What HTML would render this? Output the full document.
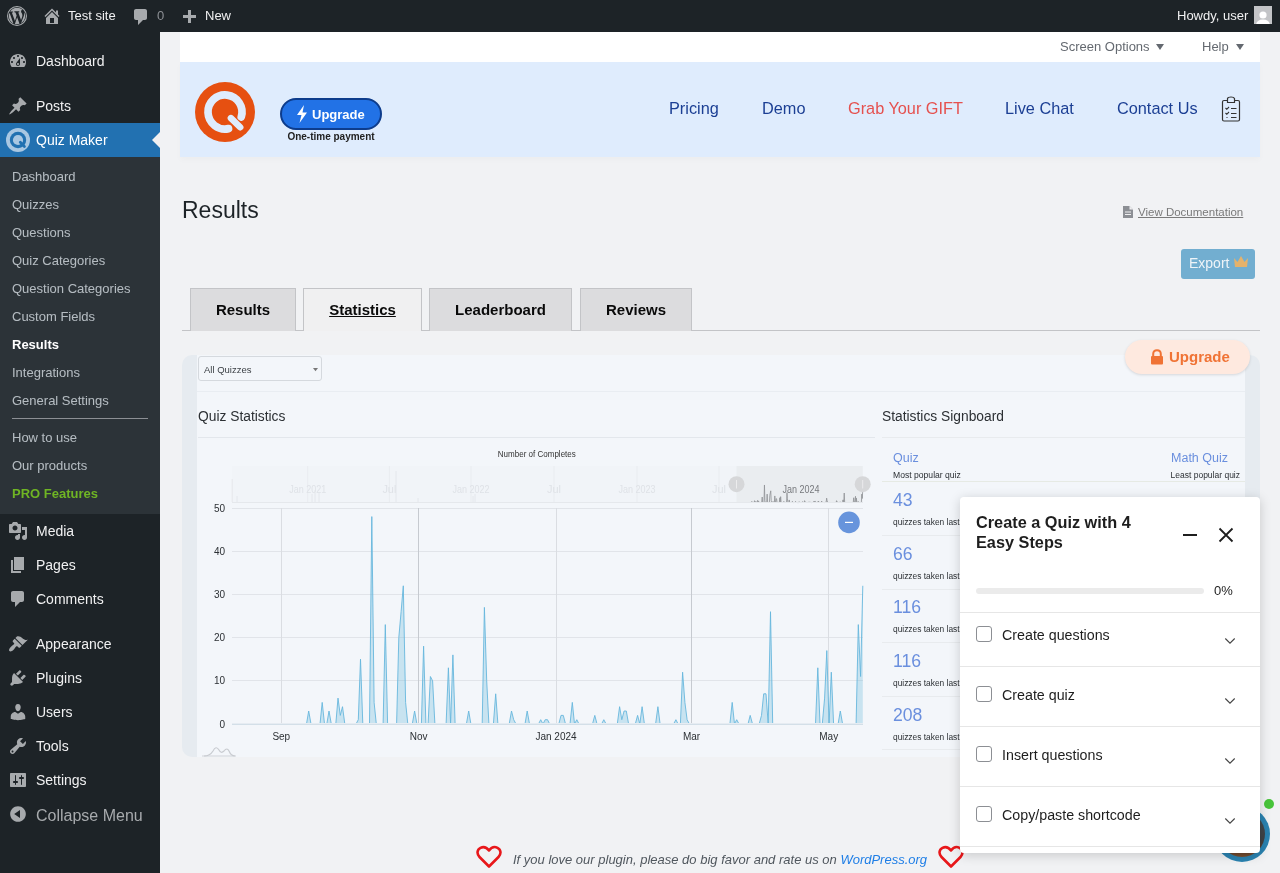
<!DOCTYPE html>
<html><head><meta charset="utf-8">
<style>
*{box-sizing:border-box;margin:0;padding:0}
html,body{width:1280px;height:873px;overflow:hidden;background:#f1f2f4;font-family:"Liberation Sans",sans-serif;font-size:13px;color:#3c434a}
.abs{position:absolute}
#root{position:absolute;left:0;top:0;width:1280px;height:873px;will-change:transform}
#ab{position:absolute;left:0;top:0;width:1280px;height:32px;background:#1d2327;color:#f0f0f1;font-size:13px;line-height:32px}
#side{position:absolute;left:0;top:32px;width:160px;height:841px;background:#1d2327}
.mi{position:absolute;left:0;width:160px;height:34px;line-height:34px;font-size:14px;color:#f0f0f1;padding-left:36px}
.mi svg{position:absolute;left:8px;top:7px;width:20px;height:20px}
.sm{position:absolute;left:12px;font-size:13px;color:rgba(240,246,252,.7);line-height:28px;height:28px}
.tab{position:absolute;top:288px;height:43px;border:1px solid #c3c4c7;border-bottom:none;background:#dcdcde;font-size:15px;font-weight:bold;color:#0a0a0a;text-align:center;line-height:42px}
.tab.act{background:#f0f0f1;height:43px}
</style></head><body><div id="root">
<!-- admin bar -->
<div id="ab">
  <svg class="abs" style="left:7px;top:6px" width="20" height="20" viewBox="0 0 20 20"><circle cx="10" cy="10" r="9.45" fill="none" stroke="#a7aaad" stroke-width="1.1"/><path transform="translate(10 10) scale(.92) translate(-10 -10)" d="M7.78 15.37L4.37 6.220c.55-.02 1.17-.08 1.17-.08.5-.06.44-1.13-.06-1.11 0 0-1.45.11-2.37.11-.18 0-.37 0-.58-.01C4.12 2.69 6.87 1.11 10 1.11c2.330 0 4.45.87 6.05 2.34-.68-.11-1.65.39-1.65 1.58 0 .74.45 1.36.9 2.1.35.61.55 1.36.55 2.46 0 1.49-1.4 5-1.4 5l-3.03-8.37c.54-.02.82-.17.82-.17.5-.05.44-1.25-.06-1.22 0 0-1.44.12-2.38.12-.87 0-2.33-.12-2.33-.12-.5-.03-.56 1.2-.06 1.22l.92.08 1.26 3.41zM17.41 10c.24-.64.74-1.87.43-4.25.7 1.29 1.05 2.71 1.05 4.25 0 3.29-1.73 6.24-4.4 7.78.97-2.59 1.94-5.2 2.92-7.78zM6.1 18.09C3.12 16.65 1.11 13.53 1.11 10c0-1.3.23-2.48.72-3.59C3.25 10.3 4.67 14.2 6.1 18.09zm4.03-6.63l2.58 6.98c-.86.29-1.76.45-2.71.45-.79 0-1.57-.11-2.29-.33.81-2.38 1.62-4.74 2.42-7.1z" fill="#a7aaad"/></svg>
  <svg class="abs" style="left:42px;top:6px" width="20" height="20" viewBox="0 0 20 20"><path d="M16 8.5l1.53 1.53-1.06 1.06L10 4.62l-6.47 6.47-1.06-1.06L10 2.5l4 4v-2h2v4zm-6-2.46l6 5.99V18H4v-5.97zM12 17v-5H8v5h4z" fill="#a7aaad"/></svg>
  <div class="abs" style="left:68px;top:0">Test site</div>
  <svg class="abs" style="left:131px;top:7px" width="20" height="20" viewBox="0 0 20 20"><path d="M5 2h9c1.1 0 2 .9 2 2v7c0 1.1-.9 2-2 2h-2l-5 5v-5H5c-1.1 0-2-.9-2-2V4c0-1.1.9-2 2-2z" fill="#a7aaad"/></svg>
  <div class="abs" style="left:157px;top:0;color:#8c8f94">0</div>
  <svg class="abs" style="left:179px;top:8px" width="20" height="20" viewBox="0 0 20 20"><path d="M17 7v3h-5v5H9v-5H4V7h5V2h3v5h5z" fill="#a7aaad"/></svg>
  <div class="abs" style="left:205px;top:0">New</div>
  <div class="abs" style="left:1177px;top:0">Howdy, user</div>
  <div class="abs" style="left:1254px;top:6px;width:18px;height:18px;background:#c3c4c7;overflow:hidden">
    <svg width="18" height="18" viewBox="0 0 18 18"><circle cx="9" cy="7" r="3.6" fill="#fff"/><path d="M2 18 Q2 11.5 9 11.5 Q16 11.5 16 18 Z" fill="#fff"/></svg>
  </div>
</div>

<!-- sidebar -->
<div id="side"></div>
<div id="menu">
  <div class="mi" style="top:44px">Dashboard
    <svg viewBox="0 0 20 20"><path d="M3.76 16h12.48c1.1-1.37 1.76-3.11 1.76-5 0-4.42-3.58-8-8-8s-8 3.58-8 8c0 1.89.66 3.63 1.76 5zM10 4c.55 0 1 .45 1 1s-.45 1-1 1-1-.45-1-1 .45-1 1-1zM6 6c.55 0 1 .45 1 1s-.45 1-1 1-1-.45-1-1 .45-1 1-1zm8 0c.55 0 1 .45 1 1s-.45 1-1 1-1-.45-1-1 .45-1 1-1zm-5.37 5.55L12 7v6c0 1.1-.9 2-2 2s-2-.9-2-2c0-.57.24-1.08.63-1.45zM4 10c.55 0 1 .45 1 1s-.45 1-1 1-1-.45-1-1 .45-1 1-1zm12 0c.55 0 1 .45 1 1s-.45 1-1 1-1-.45-1-1 .45-1 1-1zm-5 3c0-.55-.45-1-1-1s-1 .45-1 1 .45 1 1 1 1-.45 1-1z" fill="#a7aaad"/></svg></div>
  <div class="mi" style="top:89px">Posts
    <svg viewBox="0 0 20 20"><path d="M10.44 3.02l1.82-1.82 6.36 6.35-1.83 1.82c-1.05-.68-2.48-.57-3.41.36l-.75.75c-.92.93-1.04 2.35-.35 3.41l-1.83 1.82-2.41-2.41-2.8 2.79c-.42.42-3.38 2.71-3.8 2.29s1.86-3.39 2.28-3.81l2.79-2.79L4.1 9.36l1.83-1.82c1.05.69 2.48.57 3.4-.36l.75-.75c.93-.92 1.05-2.35.36-3.41z" fill="#a7aaad"/></svg></div>
  <div class="abs" style="left:0;top:123px;width:160px;height:34px;background:#2271b1"></div>
  <div class="mi" style="top:123px;color:#fff">Quiz Maker
    <svg viewBox="0 0 24 24" style="left:6px;top:5px;width:24px;height:24px"><circle cx="12" cy="12" r="12" fill="#a9c7e2"/><circle cx="12" cy="12" r="8.2" fill="#2271b1"/><circle cx="12" cy="12" r="5.1" fill="#a9c7e2"/><path d="M14.3 14.3 L18.4 18.4" stroke="#2271b1" stroke-width="2.8" stroke-linecap="round"/></svg></div>
  <svg class="abs" style="left:152px;top:132px" width="8" height="16" viewBox="0 0 8 16"><path d="M8 0 L0 8 L8 16 Z" fill="#f0f0f1"/></svg>
  <div class="abs" style="left:0;top:157px;width:160px;height:357px;background:#2c3338"></div>
  <div class="sm" style="top:163px">Dashboard</div>
  <div class="sm" style="top:191px">Quizzes</div>
  <div class="sm" style="top:219px">Questions</div>
  <div class="sm" style="top:247px">Quiz Categories</div>
  <div class="sm" style="top:275px">Question Categories</div>
  <div class="sm" style="top:303px">Custom Fields</div>
  <div class="sm" style="top:331px;color:#fff;font-weight:bold">Results</div>
  <div class="sm" style="top:359px">Integrations</div>
  <div class="sm" style="top:387px">General Settings</div>
  <div class="abs" style="left:12px;top:418px;width:136px;height:1px;background:#8c8f94"></div>
  <div class="sm" style="top:424px">How to use</div>
  <div class="sm" style="top:452px">Our products</div>
  <div class="sm" style="top:480px;color:#6fb524;font-weight:bold">PRO Features</div>

  <div class="mi" style="top:514px">Media
    <svg viewBox="0 0 20 20"><path d="M13 11V4c0-.55-.45-1-1-1h-1.67L9 1H5L3.67 3H2c-.55 0-1 .45-1 1v7c0 .55.45 1 1 1h10c.55 0 1-.45 1-1zM7 4.5c1.38 0 2.5 1.12 2.5 2.5S8.38 9.5 7 9.5 4.5 8.38 4.5 7 5.62 4.5 7 4.5zM14 6h5v10.5c0 1.38-1.12 2.5-2.5 2.5S14 17.88 14 16.5s1.12-2.5 2.5-2.5c.17 0 .34.02.5.05V9h-3V6zm-4 8.05V13h2v3.5c0 1.38-1.12 2.5-2.5 2.5S7 17.88 7 16.5 8.12 14 9.5 14c.17 0 .34.02.5.05z" fill="#a7aaad"/></svg></div>
  <div class="mi" style="top:548px">Pages
    <svg viewBox="0 0 20 20"><path d="M6 15V2h10v13H6zm-1 1h8v2H3V5h2v11z" fill="#a7aaad"/></svg></div>
  <div class="mi" style="top:582px">Comments
    <svg viewBox="0 0 20 20"><path d="M5 2h9c1.1 0 2 .9 2 2v7c0 1.1-.9 2-2 2h-2l-5 5v-5H5c-1.1 0-2-.9-2-2V4c0-1.1.9-2 2-2z" fill="#a7aaad"/></svg></div>
  <div class="mi" style="top:627px">Appearance
    <svg viewBox="0 0 20 20"><path d="M14.48 11.06L7.41 3.99l1.5-1.5c.5-.56 2.3-.47 3.51.32 1.21.8 1.43 1.28 2.91 2.1 1.180.64 2.45 1.26 4.45.85zm-.71.71L6.7 4.7 4.930 6.47c-.39.39-.39 1.02 0 1.41l1.06 1.06c.39.39.39 1.03 0 1.42-.6.6-1.43 1.11-2.21 1.69-.35.26-.7.53-1.01.84C1.43 14.23.4 16.08 1.4 17.07c.99 1 2.84-.03 4.18-1.36.31-.31.58-.66.85-1.020.57-.78 1.08-1.61 1.69-2.21.39-.39 1.02-.39 1.41 0l1.06 1.06c.39.39 1.02.39 1.41 0z" fill="#a7aaad"/></svg></div>
  <div class="mi" style="top:661px">Plugins
    <svg viewBox="0 0 20 20"><path d="M13.11 4.36L9.87 7.6 8 5.73l3.24-3.24c.35-.34 1.05-.2 1.56.32.52.51.66 1.21.31 1.55zm-8 1.77l.91-1.12 9.01 9.01-1.19.84c-.71.71-2.63 1.16-3.820 1.16H6.14L4.9 17.26c-.59.59-1.54.59-2.12 0-.59-.58-.59-1.53 0-2.12l1.24-1.24v-3.88c0-1.13.4-3.19 1.09-3.89zm7.26 3.97l3.24-3.24c.34-.35 1.04-.21 1.55.31.52.51.66 1.21.31 1.55l-3.24 3.25z" fill="#a7aaad"/></svg></div>
  <div class="mi" style="top:695px">Users
    <svg viewBox="0 0 20 20"><path d="M10 9.25c-2.27 0-2.73-3.44-2.73-3.44C7 4.02 7.82 2 9.97 2c2.16 0 2.98 2.02 2.71 3.81 0 0-.41 3.44-2.68 3.44zm0 2.57L12.72 10c2.39 0 4.52 2.33 4.52 4.53v2.49s-3.65 1.13-7.24 1.13c-3.65 0-7.24-1.13-7.24-1.13v-2.49c0-2.25 1.94-4.48 4.47-4.48z" fill="#a7aaad"/></svg></div>
  <div class="mi" style="top:729px">Tools
    <svg viewBox="0 0 20 20"><path d="M16.68 9.77c-1.34 1.34-3.3 1.67-4.95.99l-5.41 6.52c-.99.99-2.59.99-3.58 0s-.99-2.59 0-3.57l6.52-5.42c-.68-1.65-.35-3.61.99-4.95 1.28-1.28 3.12-1.62 4.72-1.06l-2.89 2.89 2.82 2.82 2.86-2.87c.53 1.58.18 3.39-1.08 4.65zM3.81 16.21c.4.39 1.04.39 1.43 0 .4-.4.4-1.04 0-1.43-.39-.4-1.03-.4-1.430 0-.39.39-.39 1.03 0 1.43z" fill="#a7aaad"/></svg></div>
  <div class="mi" style="top:763px">Settings
    <svg viewBox="0 0 20 20"><path d="M18 16V4c0-.55-.45-1-1-1H3c-.55 0-1 .45-1 1v12c0 .55.45 1 1 1h14c.55 0 1-.45 1-1zM8 11h1c.55 0 1 .45 1 1s-.45 1-1 1H8v1.5c0 .28-.22.5-.5.5s-.5-.22-.5-.5V13H6c-.55 0-1-.45-1-1s.45-1 1-1h1V5.5c0-.28.22-.5.5-.5s.5.22.5.5V11zm5-2h-1c-.55 0-1-.45-1-1s.45-1 1-1h1V5.5c0-.28.22-.5.5-.5s.5.22.5.5V7h1c.55 0 1 .45 1 1s-.45 1-1 1h-1v5.5c0 .28-.22.5-.5.5s-.5-.22-.5-.5V9z" fill="#a7aaad"/></svg></div>
  <div class="mi" style="top:799px;color:#a7aaad;font-size:16px">Collapse Menu
    <svg viewBox="0 0 20 20" style="top:5px"><path d="M10 2.16c4.33 0 7.84 3.51 7.84 7.84S14.33 17.84 10 17.84 2.16 14.33 2.160 10 5.71 2.16 10 2.16zm2 11.72V6.12L6.18 9.97z" fill="#a7aaad"/></svg></div>
</div>

<!-- content -->
<div class="abs" style="left:180px;top:32px;width:1080px;height:30px;background:#fff"></div>
<div class="abs" style="left:1060px;top:32px;height:30px;line-height:30px;font-size:13px;color:#646970">Screen Options</div>
<svg class="abs" style="left:1156px;top:44px" width="8" height="6" viewBox="0 0 8 6"><path d="M0 0 H8 L4 6 Z" fill="#646970"/></svg>
<div class="abs" style="left:1202px;top:32px;height:30px;line-height:30px;font-size:13px;color:#646970">Help</div>
<svg class="abs" style="left:1236px;top:44px" width="8" height="6" viewBox="0 0 8 6"><path d="M0 0 H8 L4 6 Z" fill="#646970"/></svg>

<div class="abs" style="left:180px;top:62px;width:1080px;height:95px;background:#dfecfd;box-shadow:0 3px 6px rgba(0,0,0,.025)"></div>
<svg class="abs" style="left:195px;top:82px" width="60" height="60" viewBox="0 0 60 60"><circle cx="30" cy="30" r="30" fill="#e65011"/><path d="M46.26 34.97 A17 17 0 1 0 33.53 46.63" fill="none" stroke="#dfecfd" stroke-width="7.7" stroke-linecap="round"/><path d="M35.9 36.1 L45.2 45.3" stroke="#dfecfd" stroke-width="6.5" stroke-linecap="round"/></svg>
<div class="abs" style="left:280px;top:98px;width:102px;height:32px;border-radius:16px;background:#2272e6;border:2px solid #0d3c8c"></div>
<svg class="abs" style="left:296px;top:105px" width="12" height="18" viewBox="0 0 12 18"><path d="M8 0 L1 10 H5.5 L3.5 18 L11 7.5 H6.5 Z" fill="#fff"/></svg>
<div class="abs" style="left:312px;top:99px;height:32px;line-height:32px;font-size:13px;font-weight:bold;color:#fff">Upgrade</div>
<div class="abs" style="left:280px;top:130px;width:102px;text-align:center;font-size:10px;font-weight:bold;color:#222;line-height:14px">One-time payment</div>

<div class="abs" style="left:669px;top:98px;line-height:20px;font-size:16.3px;color:#1c3f94">Pricing</div>
<div class="abs" style="left:762px;top:98px;line-height:20px;font-size:16.3px;color:#1c3f94">Demo</div>
<div class="abs" style="left:848px;top:98px;line-height:20px;font-size:16.3px;color:#e5514f">Grab Your GIFT</div>
<div class="abs" style="left:1005px;top:98px;line-height:20px;font-size:16.3px;color:#1c3f94">Live Chat</div>
<div class="abs" style="left:1117px;top:98px;line-height:20px;font-size:16.3px;color:#1c3f94">Contact Us</div>
<svg class="abs" style="left:1221px;top:96px" width="20" height="26" viewBox="0 0 20 26"><path d="M3 4.5 H6.5 V2.5 Q7 1 10 1 Q13 1 13.5 2.5 V4.5 H17 Q18.5 4.5 18.5 6 V23.5 Q18.5 25 17 25 H3 Q1.5 25 1.5 23.5 V6 Q1.5 4.5 3 4.5 Z M6.5 4.5 V6.5 H13.5 V4.5" fill="none" stroke="#333" stroke-width="1.2"/><path d="M4.5 12 L5.8 13.3 L8 11 M10 12.5 H15.5 M4.5 17 L5.8 18.3 L8 16 M10 17.5 H15.5 M5.5 21.5 H6.5 M10 21.5 H15.5" fill="none" stroke="#333" stroke-width="1.1"/></svg>

<div class="abs" style="left:182px;top:195px;font-size:23px;line-height:30px;color:#1d2327">Results</div>
<svg class="abs" style="left:1123px;top:206px" width="10" height="12" viewBox="0 0 10 12"><path d="M0 0 H6.5 L10 3.5 V12 H0 Z" fill="#8c8f94"/><path d="M6.5 0 V3.5 H10" fill="#f0f0f1"/><path d="M2 6 H8 M2 8.5 H8" stroke="#f0f0f1" stroke-width="1"/></svg>
<div class="abs" style="left:1138px;top:204px;font-size:11.5px;line-height:16px;color:#7a7a7a;text-decoration:underline">View Documentation</div>

<div class="abs" style="left:1181px;top:249px;width:74px;height:30px;border-radius:3px;background:#72aed0"></div>
<div class="abs" style="left:1189px;top:248px;line-height:30px;font-size:14px;color:#eef4f8">Export</div>
<svg class="abs" style="left:1233px;top:255px" width="16" height="14" viewBox="0 0 16 14"><path d="M1 3 L4.5 7 L8 1 L11.5 7 L15 3 L14 12 H2 Z" fill="#e5b26b"/></svg>

<div class="abs" style="left:182px;top:330px;width:1078px;height:1px;background:#c3c4c7"></div>
<div class="tab" style="left:190px;width:106px">Results</div>
<div class="tab act" style="left:303px;width:119px"><u>Statistics</u></div>
<div class="tab" style="left:429px;width:143px">Leaderboard</div>
<div class="tab" style="left:580px;width:112px">Reviews</div>

<!-- stats panel -->
<div class="abs" style="left:182px;top:355px;width:1078px;height:402px;background:#e6ebf0;border-radius:10px"></div>
<div class="abs" style="left:197px;top:355px;width:1048px;height:402px;background:#f3f6fa"></div>
<div class="abs" style="left:198px;top:356px;width:124px;height:25px;border:1px solid #d5d9de;border-radius:3px;background:#f3f6fa"></div>
<div class="abs" style="left:204px;top:357px;line-height:25px;font-size:9.5px;color:#3a3f44">All Quizzes</div>
<svg class="abs" style="left:313px;top:368px" width="5" height="4" viewBox="0 0 5 4"><path d="M0 0 H5 L2.5 3.2 Z" fill="#777"/></svg>
<div class="abs" style="left:197px;top:391px;width:1048px;height:1px;background:#e9edf2"></div>
<div class="abs" style="left:198px;top:408px;line-height:18px;font-size:13.8px;color:#2c3034">Quiz Statistics</div>
<div class="abs" style="left:198px;top:437px;width:677px;height:1px;background:#e3e7ec"></div>
<div class="abs" style="left:882px;top:408px;line-height:18px;font-size:13.8px;color:#2c3034">Statistics Signboard</div>
<div class="abs" style="left:882px;top:437px;width:363px;height:1px;background:#e8ebee"></div>

<div class="abs" style="left:893px;top:450px;line-height:16px;font-size:12.5px;color:#6a8fde">Quiz</div>
<div class="abs" style="left:893px;top:469px;line-height:12px;font-size:8.6px;color:#2c3034">Most popular quiz</div>
<div class="abs" style="left:1100px;top:450px;width:128px;text-align:right;line-height:16px;font-size:12.5px;color:#6a8fde">Math Quiz</div>
<div class="abs" style="left:1100px;top:469px;width:140px;text-align:right;line-height:12px;font-size:8.5px;color:#2c3034">Least popular quiz</div>
<div class="abs" style="left:882px;top:481px;width:363px;height:1px;background:#e6eae4"></div>
<div class="abs" style="left:893px;top:491px;line-height:18px;font-size:17.6px;color:#6a8fde">43</div>
<div class="abs" style="left:893px;top:516px;line-height:12px;font-size:8.4px;color:#2c3034">quizzes taken last</div>
<div class="abs" style="left:882px;top:535px;width:363px;height:1px;background:#e8ebee"></div>
<div class="abs" style="left:893px;top:545px;line-height:18px;font-size:17.6px;color:#6a8fde">66</div>
<div class="abs" style="left:893px;top:570px;line-height:12px;font-size:8.4px;color:#2c3034">quizzes taken last</div>
<div class="abs" style="left:882px;top:589px;width:363px;height:1px;background:#e8ebee"></div>
<div class="abs" style="left:893px;top:598px;line-height:18px;font-size:17.6px;color:#6a8fde">116</div>
<div class="abs" style="left:893px;top:623px;line-height:12px;font-size:8.4px;color:#2c3034">quizzes taken last</div>
<div class="abs" style="left:882px;top:642px;width:363px;height:1px;background:#e8ebee"></div>
<div class="abs" style="left:893px;top:652px;line-height:18px;font-size:17.6px;color:#6a8fde">116</div>
<div class="abs" style="left:893px;top:677px;line-height:12px;font-size:8.4px;color:#2c3034">quizzes taken last</div>
<div class="abs" style="left:882px;top:696px;width:363px;height:1px;background:#e8ebee"></div>
<div class="abs" style="left:893px;top:706px;line-height:18px;font-size:17.6px;color:#6a8fde">208</div>
<div class="abs" style="left:893px;top:731px;line-height:12px;font-size:8.4px;color:#2c3034">quizzes taken last</div>
<div class="abs" style="left:882px;top:749px;width:363px;height:1px;background:#e8ebee"></div>


<div class="abs" style="left:1125px;top:340px;width:125px;height:34px;border-radius:17px;background:#fee9df;box-shadow:0 1px 3px rgba(0,0,0,.13)"></div>
<svg class="abs" style="left:1150px;top:349px" width="14" height="16" viewBox="0 0 14 16"><path d="M3.2 7 V5 Q3.2 1.2 7 1.2 Q10.8 1.2 10.8 5 V7" fill="none" stroke="#f07335" stroke-width="2"/><rect x="1" y="7" width="12" height="8.5" rx="1" fill="#f07335"/></svg>
<div class="abs" style="left:1169px;top:347px;line-height:20px;font-size:15px;font-weight:bold;color:#f07335">Upgrade</div>
<!--CHART-->
<svg class="abs" style="left:0;top:0" width="1280" height="873" viewBox="0 0 1280 873">
<text x="497.8" y="457" textLength="78" lengthAdjust="spacingAndGlyphs" font-size="9.5" fill="#333" font-family="Liberation Sans">Number of Completes</text>
<rect x="232" y="466" width="631" height="37" fill="#f1f4f8"/>
<line x1="307.7" y1="466" x2="307.7" y2="502" stroke="#e9ecf0" stroke-width="1"/>
<line x1="389.4" y1="466" x2="389.4" y2="502" stroke="#e9ecf0" stroke-width="1"/>
<line x1="471" y1="466" x2="471" y2="502" stroke="#e9ecf0" stroke-width="1"/>
<line x1="554" y1="466" x2="554" y2="502" stroke="#e9ecf0" stroke-width="1"/>
<line x1="637" y1="466" x2="637" y2="502" stroke="#e9ecf0" stroke-width="1"/>
<line x1="719" y1="466" x2="719" y2="502" stroke="#e9ecf0" stroke-width="1"/>
<line x1="801" y1="466" x2="801" y2="502" stroke="#e9ecf0" stroke-width="1"/>
<text x="289.2" y="493" textLength="37" lengthAdjust="spacingAndGlyphs" font-size="10.5" fill="#dfe2e7" font-family="Liberation Sans">Jan 2021</text>
<text x="382.4" y="493" textLength="14" lengthAdjust="spacingAndGlyphs" font-size="10.5" fill="#dfe2e7" font-family="Liberation Sans">Jul</text>
<text x="452.5" y="493" textLength="37" lengthAdjust="spacingAndGlyphs" font-size="10.5" fill="#dfe2e7" font-family="Liberation Sans">Jan 2022</text>
<text x="547.0" y="493" textLength="14" lengthAdjust="spacingAndGlyphs" font-size="10.5" fill="#dfe2e7" font-family="Liberation Sans">Jul</text>
<text x="618.5" y="493" textLength="37" lengthAdjust="spacingAndGlyphs" font-size="10.5" fill="#dfe2e7" font-family="Liberation Sans">Jan 2023</text>
<text x="712.0" y="493" textLength="14" lengthAdjust="spacingAndGlyphs" font-size="10.5" fill="#dfe2e7" font-family="Liberation Sans">Jul</text>
<line x1="232.2" y1="502" x2="232.2" y2="479" stroke="#e2e5e9" stroke-width=".8"/>
<line x1="237" y1="502" x2="237" y2="496" stroke="#e2e5e9" stroke-width=".8"/>
<line x1="312" y1="502" x2="312" y2="494" stroke="#e2e5e9" stroke-width=".8"/>
<line x1="315" y1="502" x2="315" y2="490" stroke="#e2e5e9" stroke-width=".8"/>
<line x1="319" y1="502" x2="319" y2="492" stroke="#e2e5e9" stroke-width=".8"/>
<line x1="396" y1="502" x2="396" y2="471" stroke="#e2e5e9" stroke-width=".8"/>
<line x1="418" y1="502" x2="418" y2="498" stroke="#e2e5e9" stroke-width=".8"/>
<line x1="473" y1="502" x2="473" y2="496" stroke="#e2e5e9" stroke-width=".8"/>
<line x1="475" y1="502" x2="475" y2="494" stroke="#e2e5e9" stroke-width=".8"/>
<line x1="232" y1="502.5" x2="863" y2="502.5" stroke="#e3e6ea" stroke-width="1"/>
<rect x="736.5" y="466" width="126.2" height="37" fill="#eaedf0"/>
<text x="782.5" y="493" textLength="37" lengthAdjust="spacingAndGlyphs" font-size="10.5" fill="#77797d" font-family="Liberation Sans">Jan 2024</text>
<path d="M736.50 502.50 L736.95 502.50 L737.40 502.50 L737.85 502.50 L738.30 502.50 L738.75 502.50 L739.20 502.50 L739.65 502.50 L740.11 502.50 L740.56 502.50 L741.01 502.50 L741.46 502.50 L741.91 502.50 L742.36 502.50 L742.81 502.50 L743.26 502.50 L743.71 502.50 L744.16 502.50 L744.61 502.50 L745.06 502.50 L745.51 502.50 L745.97 502.50 L746.42 502.50 L746.87 502.50 L747.32 502.50 L747.77 502.50 L748.22 502.50 L748.67 502.50 L749.12 502.50 L749.57 502.50 L750.02 502.50 L750.47 502.50 L750.92 502.50 L751.37 502.50 L751.82 501.40 L752.27 502.50 L752.73 502.50 L753.18 502.50 L753.63 502.50 L754.08 502.50 L754.53 500.68 L754.98 502.50 L755.43 502.50 L755.88 501.40 L756.33 502.50 L756.78 502.50 L757.23 502.50 L757.68 500.31 L758.13 501.77 L758.59 501.04 L759.04 502.50 L759.49 502.50 L759.94 502.50 L760.39 502.50 L760.84 502.50 L761.29 502.50 L761.74 502.13 L762.19 497.02 L762.64 502.50 L763.09 502.50 L763.54 502.50 L763.99 502.50 L764.44 484.98 L764.89 500.68 L765.35 502.50 L765.80 502.50 L766.25 502.50 L766.70 502.50 L767.15 494.11 L767.60 502.50 L768.05 502.50 L768.50 502.50 L768.95 502.50 L769.40 502.50 L769.85 495.20 L770.30 493.01 L770.75 490.82 L771.21 500.68 L771.66 502.50 L772.11 502.50 L772.56 502.50 L773.01 501.40 L773.46 502.50 L773.91 502.50 L774.36 502.50 L774.81 495.93 L775.26 502.50 L775.71 502.50 L776.16 498.49 L776.61 498.85 L777.06 502.50 L777.51 502.50 L777.97 502.50 L778.42 502.50 L778.87 502.50 L779.32 502.50 L779.77 497.75 L780.22 502.50 L780.67 496.66 L781.12 502.50 L781.57 502.50 L782.02 502.50 L782.47 502.50 L782.92 502.50 L783.37 502.50 L783.83 501.40 L784.28 502.50 L784.73 502.50 L785.18 502.50 L785.63 502.50 L786.08 502.50 L786.53 502.50 L786.98 492.64 L787.43 498.85 L787.88 502.50 L788.33 502.50 L788.78 502.50 L789.23 499.94 L789.68 502.50 L790.13 502.50 L790.59 502.50 L791.04 502.50 L791.49 502.50 L791.94 502.50 L792.39 501.40 L792.84 502.13 L793.29 502.50 L793.74 502.50 L794.19 502.50 L794.64 502.50 L795.09 502.50 L795.54 501.40 L795.99 502.50 L796.45 502.50 L796.90 502.50 L797.35 502.50 L797.80 502.50 L798.25 502.13 L798.70 502.50 L799.15 502.13 L799.60 502.13 L800.05 502.50 L800.50 502.50 L800.95 502.50 L801.40 502.50 L801.85 502.50 L802.30 501.77 L802.75 501.77 L803.21 502.50 L803.66 502.50 L804.11 502.50 L804.56 500.68 L805.01 502.50 L805.46 502.13 L805.91 502.50 L806.36 502.50 L806.81 502.50 L807.26 502.50 L807.71 502.50 L808.16 502.50 L808.61 502.50 L809.07 501.77 L809.52 502.50 L809.97 502.50 L810.42 502.50 L810.87 502.13 L811.32 502.50 L811.77 502.50 L812.22 502.50 L812.67 502.50 L813.12 502.50 L813.57 502.50 L814.02 501.04 L814.47 502.13 L814.92 501.40 L815.38 501.40 L815.83 502.50 L816.28 502.50 L816.73 502.50 L817.18 502.50 L817.63 501.77 L818.08 502.50 L818.53 501.04 L818.98 502.50 L819.43 502.50 L819.88 502.50 L820.33 502.50 L820.78 502.50 L821.23 502.50 L821.68 501.04 L822.14 502.50 L822.59 502.50 L823.04 502.50 L823.49 502.50 L823.94 502.50 L824.39 502.50 L824.84 502.50 L825.29 502.13 L825.74 502.50 L826.19 502.50 L826.64 498.12 L827.09 500.68 L827.54 502.13 L828.00 502.50 L828.45 502.50 L828.90 502.50 L829.35 502.50 L829.80 502.50 L830.25 502.50 L830.70 502.50 L831.15 502.50 L831.60 502.50 L832.05 502.50 L832.50 502.50 L832.95 502.50 L833.40 502.50 L833.85 502.50 L834.31 502.50 L834.76 502.50 L835.21 502.50 L835.66 502.50 L836.11 502.50 L836.56 500.68 L837.01 502.50 L837.46 502.13 L837.91 502.50 L838.36 502.50 L838.81 502.50 L839.26 502.50 L839.71 502.50 L840.16 501.77 L840.62 502.50 L841.07 502.50 L841.52 502.50 L841.97 502.50 L842.42 501.77 L842.87 499.94 L843.32 499.94 L843.77 502.50 L844.22 493.01 L844.67 502.50 L845.12 502.50 L845.57 502.50 L846.02 502.50 L846.47 502.50 L846.92 502.50 L847.38 502.50 L847.83 502.50 L848.28 502.50 L848.73 502.50 L849.18 502.50 L849.63 502.50 L850.08 502.50 L850.53 502.50 L850.98 502.50 L851.43 502.50 L851.88 502.50 L852.33 502.50 L852.78 502.50 L853.24 502.50 L853.69 497.75 L854.14 502.50 L854.59 502.50 L855.04 500.31 L855.49 496.30 L855.94 502.50 L856.39 498.12 L856.84 502.50 L857.29 502.50 L857.74 502.50 L858.19 501.40 L858.64 502.50 L859.09 502.50 L859.54 502.50 L860.00 502.50 L860.45 502.50 L860.90 502.50 L861.35 502.50 L861.80 494.11 L862.25 498.49 L862.70 490.82" fill="none" stroke="#8f9296" stroke-width=".8"/>
<line x1="232" y1="502.5" x2="863" y2="502.5" stroke="#e5e8ec" stroke-width="1.2"/>
<circle cx="736.5" cy="484.2" r="8" fill="#d6d7d9"/>
<line x1="736.5" y1="480" x2="736.5" y2="488.5" stroke="#eeeeef" stroke-width=".9"/>
<circle cx="862.7" cy="484.2" r="8" fill="#d6d7d9"/>
<line x1="862.7" y1="480" x2="862.7" y2="488.5" stroke="#eeeeef" stroke-width=".9"/>
<text x="225" y="727.5" text-anchor="end" font-size="10" fill="#2c3034" font-family="Liberation Sans">0</text>
<line x1="232" y1="680.5" x2="863" y2="680.5" stroke="#e1e4e9" stroke-width="1"/>
<text x="225" y="684.3" text-anchor="end" font-size="10" fill="#2c3034" font-family="Liberation Sans">10</text>
<line x1="232" y1="637.5" x2="863" y2="637.5" stroke="#e1e4e9" stroke-width="1"/>
<text x="225" y="641.1" text-anchor="end" font-size="10" fill="#2c3034" font-family="Liberation Sans">20</text>
<line x1="232" y1="594.5" x2="863" y2="594.5" stroke="#e1e4e9" stroke-width="1"/>
<text x="225" y="597.9" text-anchor="end" font-size="10" fill="#2c3034" font-family="Liberation Sans">30</text>
<line x1="232" y1="551.5" x2="863" y2="551.5" stroke="#e1e4e9" stroke-width="1"/>
<text x="225" y="554.7" text-anchor="end" font-size="10" fill="#2c3034" font-family="Liberation Sans">40</text>
<line x1="232" y1="508.5" x2="863" y2="508.5" stroke="#e1e4e9" stroke-width="1"/>
<text x="225" y="511.5" text-anchor="end" font-size="10" fill="#2c3034" font-family="Liberation Sans">50</text>
<line x1="281.5" y1="508" x2="281.5" y2="724" stroke="#dadde2" stroke-width="1"/>
<text x="281.3" y="740" text-anchor="middle" font-size="10" fill="#2c3034" font-family="Liberation Sans">Sep</text>
<line x1="418.5" y1="508" x2="418.5" y2="724" stroke="#c6cad0" stroke-width="1"/>
<text x="418.7" y="740" text-anchor="middle" font-size="10" fill="#2c3034" font-family="Liberation Sans">Nov</text>
<line x1="556.5" y1="508" x2="556.5" y2="724" stroke="#dadde2" stroke-width="1"/>
<text x="556" y="740" text-anchor="middle" font-size="10" fill="#2c3034" font-family="Liberation Sans">Jan 2024</text>
<line x1="691.5" y1="508" x2="691.5" y2="724" stroke="#c6cad0" stroke-width="1"/>
<text x="691.5" y="740" text-anchor="middle" font-size="10" fill="#2c3034" font-family="Liberation Sans">Mar</text>
<line x1="828.5" y1="508" x2="828.5" y2="724" stroke="#dadde2" stroke-width="1"/>
<text x="828.7" y="740" text-anchor="middle" font-size="10" fill="#2c3034" font-family="Liberation Sans">May</text>
<path d="M232.1 724.0 L234.4 724.0 L236.6 724.0 L238.9 724.0 L241.2 724.0 L243.4 724.0 L245.7 724.0 L247.9 724.0 L250.2 724.0 L252.4 724.0 L254.7 724.0 L256.9 724.0 L259.2 724.0 L261.4 724.0 L263.7 724.0 L265.9 724.0 L268.2 724.0 L270.4 724.0 L272.7 724.0 L274.9 724.0 L277.2 724.0 L279.4 724.0 L281.7 724.0 L284.0 724.0 L286.2 724.0 L288.5 724.0 L290.7 724.0 L293.0 724.0 L295.2 724.0 L297.5 724.0 L299.7 724.0 L302.0 724.0 L304.2 724.0 L306.5 724.0 L308.7 711.0 L311.0 724.0 L313.2 724.0 L315.5 724.0 L317.7 724.0 L320.0 724.0 L322.2 702.4 L324.5 724.0 L326.8 724.0 L329.0 711.0 L331.3 724.0 L333.5 724.0 L335.8 724.0 L338.0 698.1 L340.3 715.4 L342.5 706.7 L344.8 724.0 L347.0 724.0 L349.3 724.0 L351.5 724.0 L353.8 724.0 L356.0 724.0 L358.3 719.7 L360.5 659.2 L362.8 724.0 L365.0 724.0 L367.3 724.0 L369.5 724.0 L371.8 516.6 L374.1 702.4 L376.3 724.0 L378.6 724.0 L380.8 724.0 L383.1 724.0 L385.3 624.6 L387.6 724.0 L389.8 724.0 L392.1 724.0 L394.3 724.0 L396.6 724.0 L398.8 637.6 L401.1 611.7 L403.3 585.8 L405.6 702.4 L407.8 724.0 L410.1 724.0 L412.3 724.0 L414.6 711.0 L416.9 724.0 L419.1 724.0 L421.4 724.0 L423.6 646.2 L425.9 724.0 L428.1 724.0 L430.4 676.5 L432.6 680.8 L434.9 724.0 L437.1 724.0 L439.4 724.0 L441.6 724.0 L443.9 724.0 L446.1 724.0 L448.4 667.8 L450.6 724.0 L452.9 654.9 L455.1 724.0 L457.4 724.0 L459.6 724.0 L461.9 724.0 L464.2 724.0 L466.4 724.0 L468.7 711.0 L470.9 724.0 L473.2 724.0 L475.4 724.0 L477.7 724.0 L479.9 724.0 L482.2 724.0 L484.4 607.4 L486.7 680.8 L488.9 724.0 L491.2 724.0 L493.4 724.0 L495.7 693.8 L497.9 724.0 L500.2 724.0 L502.4 724.0 L504.7 724.0 L506.9 724.0 L509.2 724.0 L511.5 711.0 L513.7 719.7 L516.0 724.0 L518.2 724.0 L520.5 724.0 L522.7 724.0 L525.0 724.0 L527.2 711.0 L529.5 724.0 L531.7 724.0 L534.0 724.0 L536.2 724.0 L538.5 724.0 L540.7 719.7 L543.0 724.0 L545.2 719.7 L547.5 719.7 L549.7 724.0 L552.0 724.0 L554.3 724.0 L556.5 724.0 L558.8 724.0 L561.0 715.4 L563.3 715.4 L565.5 724.0 L567.8 724.0 L570.0 724.0 L572.3 702.4 L574.5 724.0 L576.8 719.7 L579.0 724.0 L581.3 724.0 L583.5 724.0 L585.8 724.0 L588.0 724.0 L590.3 724.0 L592.5 724.0 L594.8 715.4 L597.0 724.0 L599.3 724.0 L601.6 724.0 L603.8 719.7 L606.1 724.0 L608.3 724.0 L610.6 724.0 L612.8 724.0 L615.1 724.0 L617.3 724.0 L619.6 706.7 L621.8 719.7 L624.1 711.0 L626.3 711.0 L628.6 724.0 L630.8 724.0 L633.1 724.0 L635.3 724.0 L637.6 715.4 L639.8 724.0 L642.1 706.7 L644.4 724.0 L646.6 724.0 L648.9 724.0 L651.1 724.0 L653.4 724.0 L655.6 724.0 L657.9 706.7 L660.1 724.0 L662.4 724.0 L664.6 724.0 L666.9 724.0 L669.1 724.0 L671.4 724.0 L673.6 724.0 L675.9 719.7 L678.1 724.0 L680.4 724.0 L682.6 672.2 L684.9 702.4 L687.1 719.7 L689.4 724.0 L691.7 724.0 L693.9 724.0 L696.2 724.0 L698.4 724.0 L700.7 724.0 L702.9 724.0 L705.2 724.0 L707.4 724.0 L709.7 724.0 L711.9 724.0 L714.2 724.0 L716.4 724.0 L718.7 724.0 L720.9 724.0 L723.2 724.0 L725.4 724.0 L727.7 724.0 L729.9 724.0 L732.2 702.4 L734.5 724.0 L736.7 719.7 L739.0 724.0 L741.2 724.0 L743.5 724.0 L745.7 724.0 L748.0 724.0 L750.2 715.4 L752.5 724.0 L754.7 724.0 L757.0 724.0 L759.2 724.0 L761.5 715.4 L763.7 693.8 L766.0 693.8 L768.2 724.0 L770.5 611.7 L772.7 724.0 L775.0 724.0 L777.2 724.0 L779.5 724.0 L781.8 724.0 L784.0 724.0 L786.3 724.0 L788.5 724.0 L790.8 724.0 L793.0 724.0 L795.3 724.0 L797.5 724.0 L799.8 724.0 L802.0 724.0 L804.3 724.0 L806.5 724.0 L808.8 724.0 L811.0 724.0 L813.3 724.0 L815.5 724.0 L817.8 667.8 L820.0 724.0 L822.3 724.0 L824.6 698.1 L826.8 650.6 L829.1 724.0 L831.3 672.2 L833.6 724.0 L835.8 724.0 L838.1 724.0 L840.3 711.0 L842.6 724.0 L844.8 724.0 L847.1 724.0 L849.3 724.0 L851.6 724.0 L853.8 724.0 L856.1 724.0 L858.3 624.6 L860.6 676.5 L862.8 585.8 L862.8 724 L232.1 724 Z" fill="#67b7dc" fill-opacity=".3" stroke="none"/>
<path d="M232.1 724.0 L234.4 724.0 L236.6 724.0 L238.9 724.0 L241.2 724.0 L243.4 724.0 L245.7 724.0 L247.9 724.0 L250.2 724.0 L252.4 724.0 L254.7 724.0 L256.9 724.0 L259.2 724.0 L261.4 724.0 L263.7 724.0 L265.9 724.0 L268.2 724.0 L270.4 724.0 L272.7 724.0 L274.9 724.0 L277.2 724.0 L279.4 724.0 L281.7 724.0 L284.0 724.0 L286.2 724.0 L288.5 724.0 L290.7 724.0 L293.0 724.0 L295.2 724.0 L297.5 724.0 L299.7 724.0 L302.0 724.0 L304.2 724.0 L306.5 724.0 L308.7 711.0 L311.0 724.0 L313.2 724.0 L315.5 724.0 L317.7 724.0 L320.0 724.0 L322.2 702.4 L324.5 724.0 L326.8 724.0 L329.0 711.0 L331.3 724.0 L333.5 724.0 L335.8 724.0 L338.0 698.1 L340.3 715.4 L342.5 706.7 L344.8 724.0 L347.0 724.0 L349.3 724.0 L351.5 724.0 L353.8 724.0 L356.0 724.0 L358.3 719.7 L360.5 659.2 L362.8 724.0 L365.0 724.0 L367.3 724.0 L369.5 724.0 L371.8 516.6 L374.1 702.4 L376.3 724.0 L378.6 724.0 L380.8 724.0 L383.1 724.0 L385.3 624.6 L387.6 724.0 L389.8 724.0 L392.1 724.0 L394.3 724.0 L396.6 724.0 L398.8 637.6 L401.1 611.7 L403.3 585.8 L405.6 702.4 L407.8 724.0 L410.1 724.0 L412.3 724.0 L414.6 711.0 L416.9 724.0 L419.1 724.0 L421.4 724.0 L423.6 646.2 L425.9 724.0 L428.1 724.0 L430.4 676.5 L432.6 680.8 L434.9 724.0 L437.1 724.0 L439.4 724.0 L441.6 724.0 L443.9 724.0 L446.1 724.0 L448.4 667.8 L450.6 724.0 L452.9 654.9 L455.1 724.0 L457.4 724.0 L459.6 724.0 L461.9 724.0 L464.2 724.0 L466.4 724.0 L468.7 711.0 L470.9 724.0 L473.2 724.0 L475.4 724.0 L477.7 724.0 L479.9 724.0 L482.2 724.0 L484.4 607.4 L486.7 680.8 L488.9 724.0 L491.2 724.0 L493.4 724.0 L495.7 693.8 L497.9 724.0 L500.2 724.0 L502.4 724.0 L504.7 724.0 L506.9 724.0 L509.2 724.0 L511.5 711.0 L513.7 719.7 L516.0 724.0 L518.2 724.0 L520.5 724.0 L522.7 724.0 L525.0 724.0 L527.2 711.0 L529.5 724.0 L531.7 724.0 L534.0 724.0 L536.2 724.0 L538.5 724.0 L540.7 719.7 L543.0 724.0 L545.2 719.7 L547.5 719.7 L549.7 724.0 L552.0 724.0 L554.3 724.0 L556.5 724.0 L558.8 724.0 L561.0 715.4 L563.3 715.4 L565.5 724.0 L567.8 724.0 L570.0 724.0 L572.3 702.4 L574.5 724.0 L576.8 719.7 L579.0 724.0 L581.3 724.0 L583.5 724.0 L585.8 724.0 L588.0 724.0 L590.3 724.0 L592.5 724.0 L594.8 715.4 L597.0 724.0 L599.3 724.0 L601.6 724.0 L603.8 719.7 L606.1 724.0 L608.3 724.0 L610.6 724.0 L612.8 724.0 L615.1 724.0 L617.3 724.0 L619.6 706.7 L621.8 719.7 L624.1 711.0 L626.3 711.0 L628.6 724.0 L630.8 724.0 L633.1 724.0 L635.3 724.0 L637.6 715.4 L639.8 724.0 L642.1 706.7 L644.4 724.0 L646.6 724.0 L648.9 724.0 L651.1 724.0 L653.4 724.0 L655.6 724.0 L657.9 706.7 L660.1 724.0 L662.4 724.0 L664.6 724.0 L666.9 724.0 L669.1 724.0 L671.4 724.0 L673.6 724.0 L675.9 719.7 L678.1 724.0 L680.4 724.0 L682.6 672.2 L684.9 702.4 L687.1 719.7 L689.4 724.0 L691.7 724.0 L693.9 724.0 L696.2 724.0 L698.4 724.0 L700.7 724.0 L702.9 724.0 L705.2 724.0 L707.4 724.0 L709.7 724.0 L711.9 724.0 L714.2 724.0 L716.4 724.0 L718.7 724.0 L720.9 724.0 L723.2 724.0 L725.4 724.0 L727.7 724.0 L729.9 724.0 L732.2 702.4 L734.5 724.0 L736.7 719.7 L739.0 724.0 L741.2 724.0 L743.5 724.0 L745.7 724.0 L748.0 724.0 L750.2 715.4 L752.5 724.0 L754.7 724.0 L757.0 724.0 L759.2 724.0 L761.5 715.4 L763.7 693.8 L766.0 693.8 L768.2 724.0 L770.5 611.7 L772.7 724.0 L775.0 724.0 L777.2 724.0 L779.5 724.0 L781.8 724.0 L784.0 724.0 L786.3 724.0 L788.5 724.0 L790.8 724.0 L793.0 724.0 L795.3 724.0 L797.5 724.0 L799.8 724.0 L802.0 724.0 L804.3 724.0 L806.5 724.0 L808.8 724.0 L811.0 724.0 L813.3 724.0 L815.5 724.0 L817.8 667.8 L820.0 724.0 L822.3 724.0 L824.6 698.1 L826.8 650.6 L829.1 724.0 L831.3 672.2 L833.6 724.0 L835.8 724.0 L838.1 724.0 L840.3 711.0 L842.6 724.0 L844.8 724.0 L847.1 724.0 L849.3 724.0 L851.6 724.0 L853.8 724.0 L856.1 724.0 L858.3 624.6 L860.6 676.5 L862.8 585.8" fill="none" stroke="#67b7dc" stroke-width=".9" stroke-linejoin="round"/>
<rect x="232" y="723" width="631" height="1" fill="#e6ecf2" shape-rendering="crispEdges"/><rect x="232" y="724" width="631" height="1" fill="#d3dfe8" shape-rendering="crispEdges"/>
<circle cx="849" cy="522.4" r="10.8" fill="#6794dc"/>
<line x1="845" y1="522.4" x2="853" y2="522.4" stroke="#fff" stroke-width="1.2"/>
<path d="M202 756 H236" stroke="#d0d3d8" stroke-width="1"/>
<path d="M204 756 Q210 756 213 751 Q216 745 219 750 Q221 754 224 751 Q227 747 229 751 Q231 756 235 756" fill="none" stroke="#c8cbd0" stroke-width="1.2"/>
</svg>
<!--/CHART-->
<!-- footer -->
<svg class="abs" style="left:476px;top:845px" width="26" height="24" viewBox="0 0 26 24"><path d="M13 21.5 L3.5 12 C0.5 9 1 4.5 4.5 2.8 C7.5 1.3 10.8 2.5 13 5.5 C15.2 2.5 18.5 1.3 21.5 2.8 C25 4.5 25.5 9 22.5 12 Z" fill="none" stroke="#e8171a" stroke-width="2.6" stroke-linejoin="round"/></svg>
<div class="abs" style="left:513px;top:852px;line-height:16px;font-size:13px;font-style:italic;color:#50575e">If you love our plugin, please do big favor and rate us on <span style="color:#2271b1;color:#1e7ee6">WordPress.org</span></div>
<svg class="abs" style="left:938px;top:845px" width="26" height="24" viewBox="0 0 26 24"><path d="M13 21.5 L3.5 12 C0.5 9 1 4.5 4.5 2.8 C7.5 1.3 10.8 2.5 13 5.5 C15.2 2.5 18.5 1.3 21.5 2.8 C25 4.5 25.5 9 22.5 12 Z" fill="none" stroke="#e8171a" stroke-width="2.6" stroke-linejoin="round"/></svg>

<!-- chat avatar -->
<div class="abs" style="left:1214px;top:806px;width:56px;height:56px;border-radius:50%;background:#2a82b0"></div>
<div class="abs" style="left:1219px;top:811px;width:46px;height:46px;border-radius:50%;background:linear-gradient(#454b50 0%,#3e4246 60%,#5a3b28 85%,#7a5030 100%)"></div>
<div class="abs" style="left:1264px;top:799px;width:10px;height:10px;border-radius:50%;background:#48c43a"></div>

<!-- popup -->
<div class="abs" style="left:960px;top:497px;width:300px;height:356px;background:#fff;border-radius:4px;box-shadow:0 2px 12px rgba(0,0,0,.18)"></div>
<div class="abs" style="left:976px;top:511.7px;width:185px;line-height:20px;font-size:16.3px;font-weight:bold;color:#1e1e1e">Create a Quiz with 4 Easy Steps</div>
<div class="abs" style="left:1183px;top:534px;width:14px;height:2px;background:#1e1e1e"></div>
<svg class="abs" style="left:1218px;top:527px" width="16" height="16" viewBox="0 0 16 16"><path d="M1.5 1.5 L14.5 14.5 M14.5 1.5 L1.5 14.5" stroke="#1e1e1e" stroke-width="1.8"/></svg>
<div class="abs" style="left:976px;top:588px;width:228px;height:6px;border-radius:3px;background:#ebebeb"></div>
<div class="abs" style="left:1214px;top:583px;line-height:16px;font-size:13px;color:#1e1e1e">0%</div>
<div class="abs" style="left:960px;top:612px;width:300px;height:1px;background:#e6e6e6"></div>
<div class="abs" style="left:976px;top:626px;width:16px;height:16px;border:1px solid #8c8f94;border-radius:3px;background:#fff"></div>
<div class="abs" style="left:1002px;top:626px;line-height:18px;font-size:14.25px;color:#1e1e1e">Create questions</div>
<svg class="abs" style="left:1224px;top:637px" width="12" height="8" viewBox="0 0 12 8"><path d="M1.3 1.5 L6 6.2 L10.7 1.5" fill="none" stroke="#444" stroke-width="1.1"/></svg>
<div class="abs" style="left:960px;top:666px;width:300px;height:1px;background:#e6e6e6"></div>
<div class="abs" style="left:976px;top:686px;width:16px;height:16px;border:1px solid #8c8f94;border-radius:3px;background:#fff"></div>
<div class="abs" style="left:1002px;top:686px;line-height:18px;font-size:14.25px;color:#1e1e1e">Create quiz</div>
<svg class="abs" style="left:1224px;top:697px" width="12" height="8" viewBox="0 0 12 8"><path d="M1.3 1.5 L6 6.2 L10.7 1.5" fill="none" stroke="#444" stroke-width="1.1"/></svg>
<div class="abs" style="left:960px;top:726px;width:300px;height:1px;background:#e6e6e6"></div>
<div class="abs" style="left:976px;top:746px;width:16px;height:16px;border:1px solid #8c8f94;border-radius:3px;background:#fff"></div>
<div class="abs" style="left:1002px;top:746px;line-height:18px;font-size:14.25px;color:#1e1e1e">Insert questions</div>
<svg class="abs" style="left:1224px;top:757px" width="12" height="8" viewBox="0 0 12 8"><path d="M1.3 1.5 L6 6.2 L10.7 1.5" fill="none" stroke="#444" stroke-width="1.1"/></svg>
<div class="abs" style="left:960px;top:786px;width:300px;height:1px;background:#e6e6e6"></div>
<div class="abs" style="left:976px;top:806px;width:16px;height:16px;border:1px solid #8c8f94;border-radius:3px;background:#fff"></div>
<div class="abs" style="left:1002px;top:806px;line-height:18px;font-size:14.25px;color:#1e1e1e">Copy/paste shortcode</div>
<svg class="abs" style="left:1224px;top:817px" width="12" height="8" viewBox="0 0 12 8"><path d="M1.3 1.5 L6 6.2 L10.7 1.5" fill="none" stroke="#444" stroke-width="1.1"/></svg>
<div class="abs" style="left:960px;top:846px;width:300px;height:1px;background:#e6e6e6"></div>
</div></body></html>
